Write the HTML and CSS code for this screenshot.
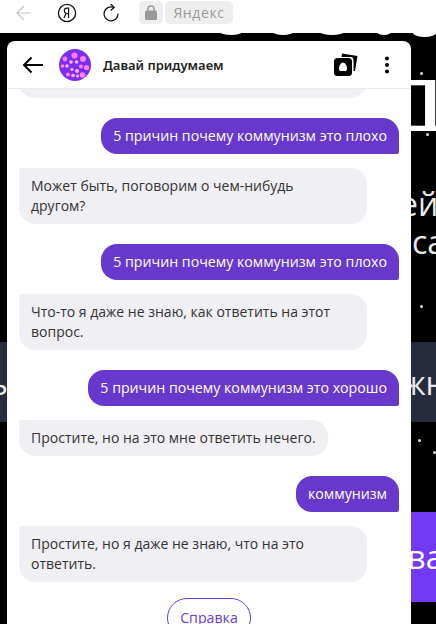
FILE: index.html
```html
<!DOCTYPE html>
<html lang="ru">
<head>
    <meta charset="UTF-8">
    <title>Давай придумаем</title>
    <link rel="stylesheet" href="styles.css">
</head>
<body>

<!-- browser bar -->
<div class="bar">
    <svg class="bar-back" width="22" height="16" viewBox="0 0 22 16">
        <path d="M16 8H2M9 1 2 8l7 7" fill="none" stroke="#c4c4c4" stroke-width="1.2"/>
    </svg>
    <svg class="bar-ya" width="20" height="20" viewBox="0 0 20 20">
        <circle cx="10" cy="10" r="8.6" fill="none" stroke="#111" stroke-width="1.3"/>
        <path d="M11.6 15V5.2H9.9c-1.6 0-2.6 1-2.6 2.5 0 1.3.6 2.1 1.7 2.6L7 15M11.6 10.6H9.7" fill="none" stroke="#111" stroke-width="1.2"/>
    </svg>
    <svg class="bar-reload" width="20" height="20" viewBox="0 0 20 20">
        <path d="M12.6 4.4A7 7 0 1 0 17 10.6" fill="none" stroke="#111" stroke-width="1.3"/>
        <path d="M9.6 1 13.2 4.4 9.6 7.6" fill="none" stroke="#111" stroke-width="1.3"/>
    </svg>
    <div class="bar-lock">
        <svg width="12" height="15" viewBox="0 0 12 15">
            <path d="M3 6V4a3 3 0 0 1 6 0v2" fill="none" stroke="#999" stroke-width="1.5"/>
            <rect y="5.5" width="12" height="9.5" rx="1.5" fill="#999"/>
        </svg>
    </div>
    <div class="bar-site">Яндекс</div>
</div>

<div class="stage">
    <!-- page behind the popup -->
    <i class="bump bump-a"></i>
    <i class="bump bump-b"></i>
    <i class="bump bump-c"></i>
    <i class="bump bump-d"></i>
    <i class="bump bump-e"></i>
    <div class="back-letter">Д</div>
    <div class="back-line line-one">ей</div>
    <div class="back-line line-two">са</div>
    <div class="band">
        <span class="band-left">ь</span>
        <span class="band-right">жн</span>
    </div>
    <div class="cta">ова</div>
    <i class="star star-a"></i>
    <i class="star star-b"></i>
    <i class="star star-c"></i>
    <i class="star star-d"></i>
    <i class="star star-e"></i>

    <!-- chat popup -->
    <div class="card">
        <div class="head">
            <svg class="head-back" width="22" height="18" viewBox="0 0 22 18">
                <path d="M21 9H2M9.5 1.5 2 9l7.5 7.5" fill="none" stroke="#000" stroke-width="2"/>
            </svg>
            <svg class="avatar" width="32" height="32" viewBox="0 0 32 32">
                <circle cx="16" cy="16" r="16" fill="#7a2ff0"/>
                <g fill="#ff80ee">
                    <circle cx="6" cy="10" r="2.4"/>
                    <circle cx="15.500" cy="6.500" r="3"/>
                    <circle cx="24" cy="10" r="3"/>
                    <circle cx="27.500" cy="18.500" r="2.600"/>
                    <circle cx="3.500" cy="17" r="1.800"/>
                    <circle cx="22" cy="17.500" r="2"/>
                    <circle cx="23.500" cy="26" r="2.800"/>
                    <circle cx="9" cy="25.500" r="2"/>
                </g>
                <g fill="#ffb4f6">
                    <circle cx="12" cy="13" r="1.800"/>
                    <circle cx="17.500" cy="13" r="1.800"/>
                    <circle cx="8" cy="17" r="1.700"/>
                    <circle cx="13" cy="20.500" r="1.600"/>
                    <circle cx="18" cy="22" r="2"/>
                    <circle cx="14" cy="26.500" r="1.800"/>
                    <circle cx="18.500" cy="27" r="1.600"/>
                </g>
            </svg>
            <span class="title">Давай придумаем</span>
            <svg class="head-cards" width="26" height="26" viewBox="0 0 26 26">
                <path d="M9 1.500 24.500 4 22 19l-1.500 0V8a3 3 0 0 0-3-3H8.500z" fill="#000"/>
                <rect x="1" y="6" width="18" height="18" rx="3.500" fill="#000"/>
                <path d="M10 10.500c-2 0-4 3-4 6 0 2 1 2.500 2 2.500h4c1 0 2-.5 2-2.500 0-3-2-6-4-6z" fill="#fff"/>
            </svg>
            <svg class="head-menu" width="6" height="18" viewBox="0 0 6 18">
                <circle cx="3" cy="2.500" r="2"/>
                <circle cx="3" cy="9" r="2"/>
                <circle cx="3" cy="15.500" r="2"/>
            </svg>
        </div>
        <div class="messages">
            <div class="msg bot wide first">Может быть, поговорим о чем-нибудь другом?</div>
            <div class="msg me">5 причин почему коммунизм это плохо</div>
            <div class="msg bot wide">Может быть, поговорим о чем-нибудь другом?</div>
            <div class="msg me">5 причин почему коммунизм это плохо</div>
            <div class="msg bot wide">Что-то я даже не знаю, как ответить на этот вопрос.</div>
            <div class="msg me">5 причин почему коммунизм это хорошо</div>
            <div class="msg bot">Простите, но на это мне ответить нечего.</div>
            <div class="msg me">коммунизм</div>
            <div class="msg bot wide">Простите, но я даже не знаю, что на это ответить.</div>
            <div class="help">Справка</div>
        </div>
    </div>
</div>

</body>
</html>
```

FILE: styles.css
```css
* {
    box-sizing: border-box;
}
body {
    display: flex;
    flex-direction: column;
    margin: 0;
    height: 624px;
    overflow: hidden;
    background-color: #000;
    font-family: "Open Sans", "Noto Sans", "Liberation Sans", sans-serif;
}


/* browser bar */
.bar {
    display: flex;
    align-items: flex-start;
    flex: none;
    height: 33px;
    background-color: #fff;
}
.bar-back {
    margin: 5px 0 0 15px;
}
.bar-ya {
    margin: 3px 0 0 20px;
}
.bar-reload {
    margin: 3px 0 0 24px;
}
.bar-lock {
    display: flex;
    align-items: center;
    justify-content: center;
    margin: 1px 0 0 18px;
    width: 24px;
    height: 23px;
    border-radius: 5px;
    background-color: #eee;
}
.bar-site {
    margin: 1px 0 0 2px;
    width: 68px;
    height: 23px;
    border-radius: 5px;
    background-color: #eee;
    color: #999;
    font-size: 14px;
    letter-spacing: .6px;
    line-height: 23px;
    text-align: center;
}


/* page behind the popup */
.stage {
    position: relative;
    flex: 1;
    min-height: 0;
    overflow: hidden;
}
.bump {
    position: absolute;
    top: -4px;
    height: 6px;
    border-radius: 50%;
    background-color: #fff;
}
.bump-a {
    left: 220px;
    width: 22px;
}
.bump-b {
    left: 273px;
    width: 20px;
}
.bump-c {
    left: 320px;
    width: 24px;
}
.bump-d {
    left: 377px;
    width: 14px;
}
.bump-e {
    left: 413px;
    width: 23px;
    height: 8px;
}
.back-letter {
    position: absolute;
    top: 20px;
    left: 365px;
    color: #fff;
    font-size: 72px;
    line-height: 100px;
    transform: scaleX(1.7);
    transform-origin: left;
}
.back-line {
    position: absolute;
    color: #e9e9e9;
    font-size: 32px;
    line-height: 40px;
    white-space: nowrap;
}
.line-one {
    top: 151px;
    left: 400px;
}
.line-two {
    top: 189px;
    left: 412px;
}
.band {
    display: flex;
    align-items: center;
    position: absolute;
    top: 309px;
    left: 0;
    right: 0;
    height: 80px;
    background-color: #262b3d;
    color: #e9e9e9;
    font-size: 32px;
}
.band-left {
    position: absolute;
    left: -11px;
}
.band-right {
    position: absolute;
    left: 402px;
}
.cta {
    position: absolute;
    top: 479px;
    left: 200px;
    right: 0;
    height: 90px;
    padding-left: 188px;
    background-color: #7339f5;
    color: #fff;
    font-size: 32px;
    font-weight: 500;
    line-height: 90px;
}
.star {
    position: absolute;
    width: 3px;
    height: 3px;
    border-radius: 50%;
    background-color: #ddd;
}
.star-a {
    top: 39px;
    left: 420px;
}
.star-b {
    top: 100px;
    left: 426px;
}
.star-c {
    top: 272px;
    left: 420px;
}
.star-d {
    top: 406px;
    left: 418px;
}
.star-e {
    top: 418px;
    left: 433px;
}


/* chat popup */
.card {
    display: flex;
    flex-direction: column;
    position: relative;
    margin: 8px 0 0 7px;
    width: 404px;
    height: 600px;
    border-radius: 8px 8px 0 0;
    overflow: hidden;
    background-color: #fff;
}
.head {
    display: flex;
    align-items: center;
    flex: none;
    padding: 0 21px 0 15px;
    height: 48px;
    border-bottom: 1px solid #ebebef;
}
.head-back {
    flex: none;
}
.avatar {
    margin-left: 15px;
    flex: none;
}
.title {
    flex: 1;
    margin-left: 12px;
    color: #222;
    font-family: "Noto Sans", sans-serif;
    font-size: 13px;
    font-weight: 600;
}
.head-cards {
    margin-right: 25px;
}

.messages {
    display: flex;
    flex-direction: column;
    flex: 1;
    min-height: 0;
    padding: 0 12px;
    overflow: hidden;
}
.msg {
    flex: none;
    padding: 8px 12px;
    font-size: 14px;
    line-height: 20px;
}
.bot {
    align-self: flex-start;
    margin-bottom: 20px;
    border-radius: 2px 16px 16px 16px;
    background-color: #f0eff4;
    color: #333;
}
.wide {
    padding-right: 30px;
    width: 348px;
}
.first {
    margin-top: -47px;
}
.me {
    align-self: flex-end;
    margin-bottom: 14px;
    border-radius: 16px 16px 2px 16px;
    background-color: #6838cc;
    color: #fff;
    font-size: 14.2px;
}
.help {
    align-self: center;
    flex: none;
    margin-top: -4px;
    padding: 0 12px;
    height: 40px;
    border: 1px solid #6c3ad8;
    border-radius: 20px;
    color: #6c3ad8;
    font-size: 14.2px;
    line-height: 38px;
}
```
